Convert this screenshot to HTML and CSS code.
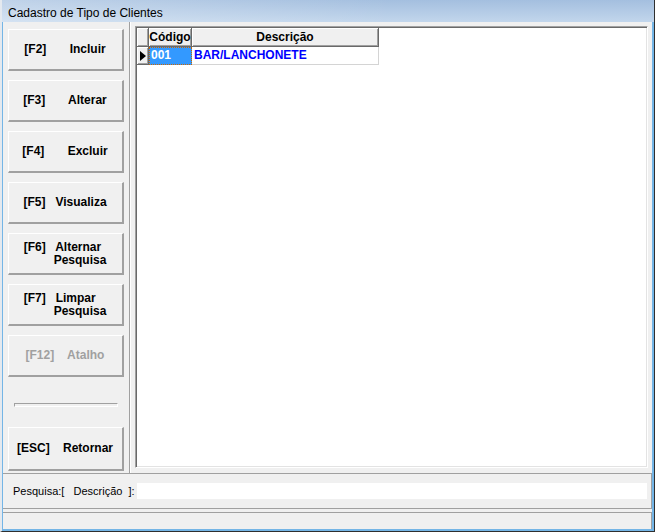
FILE: index.html
```html
<!DOCTYPE html>
<html lang="pt-BR">
<head>
    <meta charset="UTF-8">
    <title>Cadastro de Tipo de Clientes</title>
    <link rel="stylesheet" href="styles.css">
</head>
<body>
    <div class="window">
        <div class="titlebar">Cadastro de Tipo de Clientes</div>

        <div class="client">
            <div class="main">
                <div class="side">
                    <button class="btn"><span class="cap">[F2]       Incluir</span></button>
                    <button class="btn"><span class="cap">[F3]       Alterar</span></button>
                    <button class="btn"><span class="cap">[F4]       Excluir</span></button>
                    <button class="btn"><span class="cap">[F5]   Visualiza</span></button>
                    <button class="btn"><span class="cap">[F6]   Alternar
         Pesquisa</span></button>
                    <button class="btn"><span class="cap">[F7]   Limpar
         Pesquisa</span></button>
                    <button class="btn" disabled><span class="cap">[F12]    Atalho</span></button>
                    <div class="bevel"></div>
                    <button class="btn btn-esc"><span class="cap">[ESC]    Retornar</span></button>
                </div>

                <div class="grid-panel">
                    <div class="grid">
                        <div class="cols">
                            <div class="fixed"></div>
                            <div class="fixed head">Código</div>
                            <div class="fixed head">Descrição</div>

                            <div class="fixed row-mark"><span class="arrow"></span></div>
                            <div class="cell cell-sel">001</div>
                            <div class="cell">BAR/LANCHONETE</div>
                        </div>
                    </div>
                </div>
            </div>

            <div class="search">
                <span class="search-label">Pesquisa:[   Descrição  ]:</span>
                <input class="search-input" type="text">
            </div>

            <div class="status"></div>
        </div>
    </div>
</body>
</html>
```

FILE: styles.css
```css
body {
    margin: 0;
    width: 655px;
    height: 532px;
    overflow: hidden;
    background: #f0f0f0;
    font-family: 'Liberation Sans', Arial, sans-serif;
}

.window {
    width: 655px;
    height: 532px;
    box-sizing: border-box;
    display: flex;
    flex-direction: column;
    border-left: 2px solid #e4e9ef;
    border-right: 1px solid #2f2f2f;
    border-bottom: 1px solid #2f2f2f;
    background: #f0f0f0;
}

.titlebar {
    height: 22px;
    box-sizing: border-box;
    padding: 4px 0 0 6px;
    line-height: 18px;
    font-size: 12px;
    color: #000;
    background:
        linear-gradient(90deg, rgba(255, 255, 255, 0.3), rgba(255, 255, 255, 0) 60%),
        linear-gradient(180deg, #a4bfdf, #c2d6ec);
}

.client {
    flex: 1;
    display: flex;
    flex-direction: column;
    border-left: 1px solid #74b5e6;
    border-right: 2px solid #74b5e6;
    border-bottom: 2px solid #74b5e6;
}

.main {
    height: 452px;
    box-sizing: border-box;
    display: flex;
    border-bottom: 1px solid #a0a0a0;
}

/* botoes da esquerda */
.side {
    width: 127px;
    box-sizing: border-box;
    display: flex;
    flex-direction: column;
    gap: 9px;
    padding: 7px 0 0 5px;
    border-right: 1px solid #a0a0a0;
}

.btn {
    width: 116px;
    height: 42px;
    box-sizing: border-box;
    display: flex;
    align-items: center;
    justify-content: center;
    padding: 0 1px 0 0;
    background: #f0f0f0;
    border-style: solid;
    border-width: 1px 2px 2px 1px;
    border-color: #fff #a0a0a0 #a0a0a0 #fff;
    font-family: 'Liberation Sans', Arial, sans-serif;
    font-size: 12px;
    font-weight: bold;
    color: #000;
}

.btn:disabled {
    color: #a0a0a0;
}

.cap {
    white-space: pre;
    text-align: left;
    line-height: 13px;
}

.btn-esc {
    height: 44px;
    margin-top: 11px;
}

.bevel {
    width: 104px;
    height: 4px;
    box-sizing: border-box;
    margin: 17px 0 0 6px;
    border-style: solid;
    border-width: 1px;
    border-color: #a0a0a0 #fff #fff #a0a0a0;
}

/* grade */
.grid-panel {
    flex: 1;
    display: flex;
    padding: 4px 4px 5px 4px;
    border-left: 1px solid #fff;
}

.grid {
    flex: 1;
    box-sizing: border-box;
    background: #fff;
    border: 1px solid;
    border-color: #a0a0a0 #fff #fff #a0a0a0;
    box-shadow: inset 1px 1px #696969, inset -1px -1px #e3e3e3;
    padding: 1px 0 0 1px;
}

.cols {
    display: grid;
    grid-template-columns: 12px 43px 187px;
    grid-template-rows: 19px 18px;
    font-size: 12px;
    font-weight: bold;
}

.fixed {
    box-sizing: border-box;
    background: #f0f0f0;
    border-right: 1px solid #696969;
    border-bottom: 1px solid #696969;
    box-shadow: inset 1px 1px #fff, inset -1px -1px #a0a0a0;
}

.head {
    text-align: center;
    line-height: 18px;
    color: #000;
}

.row-mark {
    display: flex;
    align-items: center;
    padding-left: 3px;
}

.arrow {
    width: 0;
    height: 0;
    border-left: 6px solid #000;
    border-top: 5px solid transparent;
    border-bottom: 5px solid transparent;
}

.cell {
    box-sizing: border-box;
    padding-left: 2px;
    line-height: 17px;
    color: #0000ff;
    border-right: 1px solid #d4d4d4;
    border-bottom: 1px solid #d4d4d4;
}

.cell-sel {
    background: #3399ff;
    color: #fff;
    border: 1px dotted #cc6600;
    padding-left: 1px;
    line-height: 15px;
}

/* pesquisa e barra de status */
.search {
    height: 35px;
    box-sizing: border-box;
    display: flex;
    align-items: center;
    padding: 0 4px 0 10px;
    border-right: 1px solid #a0a0a0;
    border-bottom: 1px solid #a0a0a0;
}

.search-label {
    width: 124px;
    flex-shrink: 0;
    white-space: pre;
    font-size: 11px;
    color: #000;
}

.search-input {
    flex: 1;
    height: 16px;
    box-sizing: border-box;
    border: none;
    padding: 0;
    background: #fff;
}

.status {
    height: 17px;
    box-sizing: border-box;
    margin-top: 3px;
    border-top: 1px solid #a0a0a0;
    border-right: 1px solid #a0a0a0;
}
```
